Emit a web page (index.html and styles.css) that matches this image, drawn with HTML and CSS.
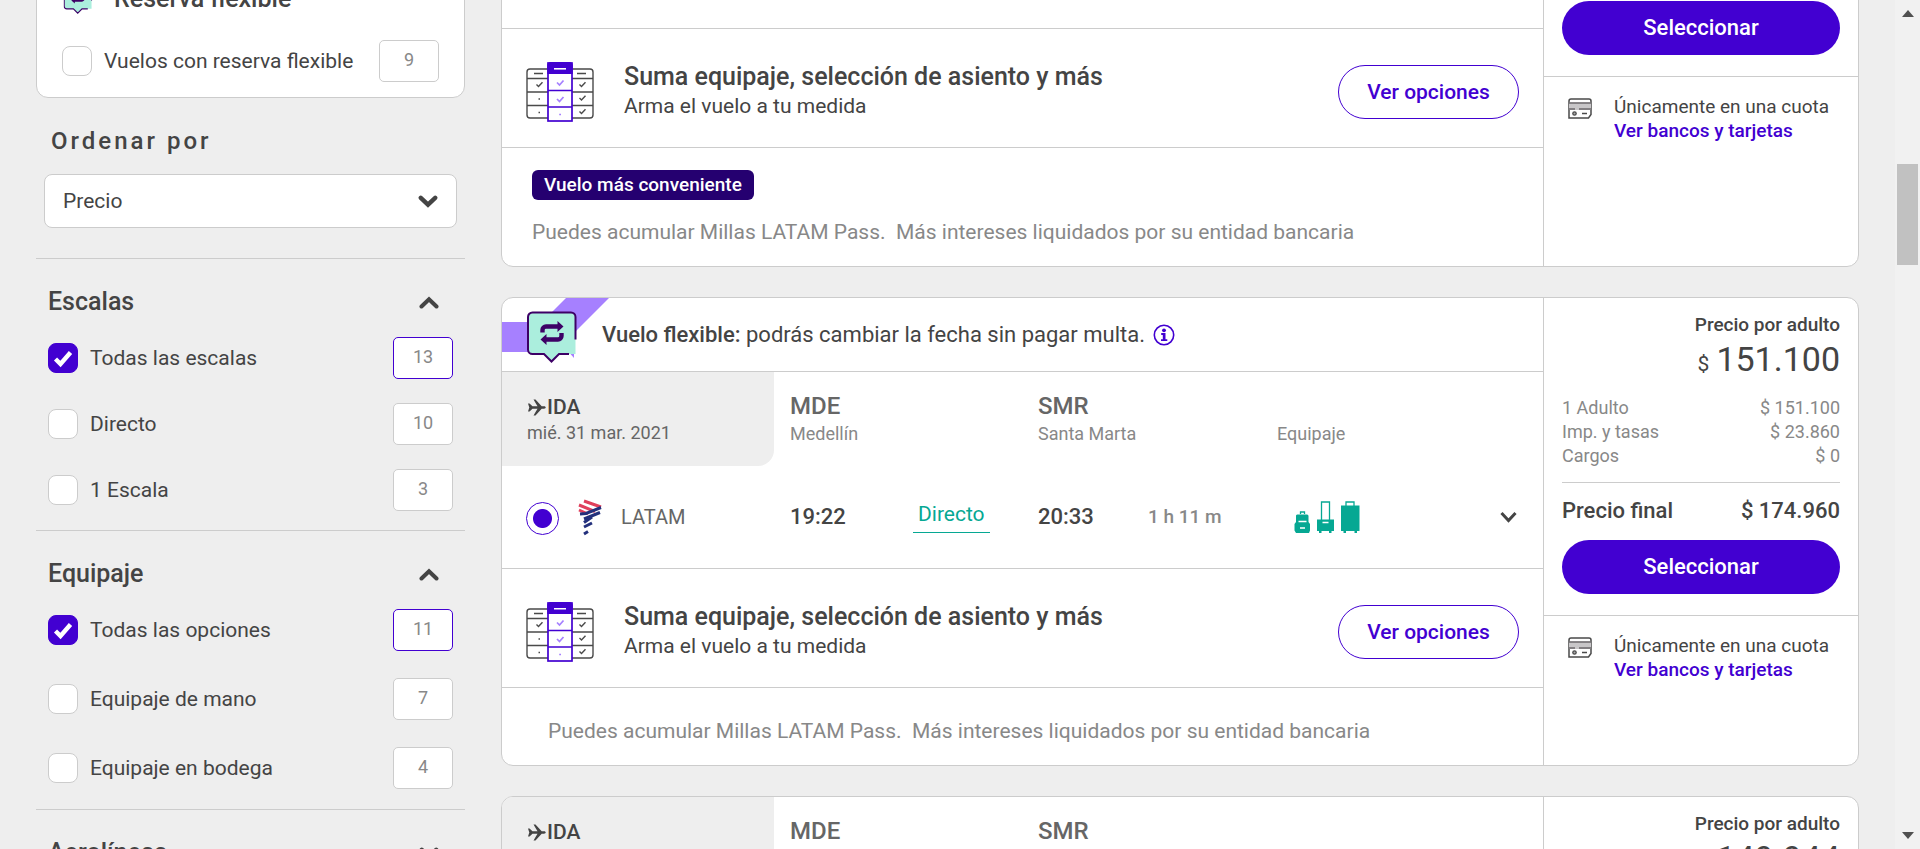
FILE: index.html
```html
<!DOCTYPE html>
<html lang="es">
<head>
<meta charset="utf-8">
<title>Vuelos Medellín - Santa Marta</title>
<link rel="stylesheet" href="styles.css">
</head>
<body>
<svg class="defs" aria-hidden="true">
  <symbol id="i-down" viewBox="0 0 20 13"><path d="M2.8 2.8 10 9.6l7.200-6.800" fill="none" stroke="currentColor" stroke-width="4.400" stroke-linecap="round"/></symbol>
  <symbol id="i-up" viewBox="0 0 20 13"><path d="M2.500 10.500 10 3.200l7.500 7.300" fill="none" stroke="currentColor" stroke-width="4" stroke-linecap="round"/></symbol>
  <symbol id="i-check" viewBox="0 0 30 30"><path d="m7.500 16 5 5L22.500 9.500" fill="none" stroke="#fff" stroke-width="4.400"/></symbol>
  <symbol id="i-flex" viewBox="0 0 50 52">
    <path d="M5 1.500h39a4.500 4.500 0 0 1 4.500 4.500v37H32l-7.500 8L17 43H5.500A4.500 4.500 0 0 1 1 38.500V6a4.500 4.500 0 0 1 4-4.500z" fill="#abeedd"/>
    <path d="M48.500 28.500V6A4.500 4.500 0 0 0 44 1.500H5.500A4.500 4.500 0 0 0 1 6v32.500A4.500 4.500 0 0 0 5.500 43H17l7.500 7.500L32 43h10" fill="none" stroke="#3d0066" stroke-width="2"/>
    <path d="M15.500 21.500v-2.500a3.500 3.500 0 0 1 3.500-3.500h13M34.500 22v3a3.500 3.500 0 0 1-3.500 3.500H18" fill="none" stroke="#3d0066" stroke-width="4.400"/>
    <path d="M30.500 10l6 5.500-6 5.500zM19.500 23l-6 5.500 6 5.500z" fill="#3d0066"/>
  </symbol>
  <symbol id="i-table" viewBox="0 0 68 60">
    <g fill="none" stroke="#4a4a4a" stroke-width="1.400">
      <rect x="1" y="7" width="66" height="49" rx="3" fill="#fff"/>
      <path d="M1 16.500h66M1 30h66M1 43.500h66M8 11.500h9M51 11.500h9"/>
      <path d="m10.500 22.500 2 2 4-4.200M53.500 22.500l2 2 4-4.200M53.500 36l2 2 4-4.200M53.500 49.500l2 2 4-4.200M12.500 37h1.500M12.500 50.500h1.500"/>
    </g>
    <rect x="22" y="1" width="24" height="58" fill="#fff" stroke="#4200d1" stroke-width="1.700"/>
    <path d="M21.200 12V3.500a3.500 3.500 0 0 1 3.500-3.500h18.600a3.500 3.500 0 0 1 3.500 3.500V12z" fill="#4200d1"/>
    <path d="M28 6.800h12" stroke="#fff" stroke-width="1.600"/>
    <path d="M22 28.500h24M22 45h24" stroke="#4200d1" stroke-width="1.700"/>
    <path d="m31 20.500 2.500 2.500 4-4.500M31 37l2.500 2.500 4-4.500M33.200 52.500h1.800" fill="none" stroke="#a680ff" stroke-width="1.700"/>
  </symbol>
  <symbol id="i-card" viewBox="0 0 24 21">
    <path d="M3 1h18a2 2 0 0 1 2 2v13.500L20.500 20H1V3a2 2 0 0 1 2-2z" fill="#fff" stroke="#4a4a4a" stroke-width="1.500"/>
    <path d="M1 4.500h22v7.500H1z" fill="#c8c6c8"/><path d="M1 5h22M1 11h6m4 0h12" stroke="#6b686b" stroke-width="1.700"/>
    <path d="M14 15.500h5" stroke="#4a4a4a" stroke-width="1.500"/><circle cx="6.500" cy="15.500" r="1.700" fill="#aaa" stroke="#4a4a4a" stroke-width="1.300"/>
  </symbol>
  <symbol id="i-plane" viewBox="0 0 19 17">
    <path d="M1 4.500h1.500l3 2.800h5L6.500.5h2l6.200 6.800h2.300c1.200 0 1.700.7 1.700 1.200s-.5 1.200-1.700 1.200h-2.300L8.500 16.500h-2l4-6.800h-5l-3 2.800H1L2.300 8.500z" fill="currentColor"/>
  </symbol>
</svg>

<div class="app">
  <aside class="sidebar">
    <section class="flex-card">
      <h2 class="flex-card-title"><svg class="flex-mini" viewBox="0 0 50 52"><use href="#i-flex"/></svg>Reserva flexible</h2>
      <label class="option">
        <span class="tick"><input type="checkbox"></span>
        <span class="option-name">Vuelos con reserva flexible</span>
        <span class="count">9</span>
      </label>
    </section>
    <section class="sort">
      <h2><label for="orden">Ordenar por</label></h2>
      <div class="select-box">
        <select id="orden"><option>Precio</option></select>
        <svg class="chevron"><use href="#i-down"/></svg>
      </div>
    </section>
    <section class="filter">
      <h2>Escalas <button class="toggle" aria-label="Contraer escalas"><svg class="chevron"><use href="#i-up"/></svg></button></h2>
      <label class="option"><span class="tick"><input type="checkbox" checked><svg><use href="#i-check"/></svg></span><span class="option-name">Todas las escalas</span><span class="count active">13</span></label>
      <label class="option"><span class="tick"><input type="checkbox"></span><span class="option-name">Directo</span><span class="count">10</span></label>
      <label class="option"><span class="tick"><input type="checkbox"></span><span class="option-name">1 Escala</span><span class="count">3</span></label>
    </section>
    <section class="filter roomy">
      <h2>Equipaje <button class="toggle" aria-label="Contraer equipaje"><svg class="chevron"><use href="#i-up"/></svg></button></h2>
      <label class="option"><span class="tick"><input type="checkbox" checked><svg><use href="#i-check"/></svg></span><span class="option-name">Todas las opciones</span><span class="count active">11</span></label>
      <label class="option"><span class="tick"><input type="checkbox"></span><span class="option-name">Equipaje de mano</span><span class="count">7</span></label>
      <label class="option"><span class="tick"><input type="checkbox"></span><span class="option-name">Equipaje en bodega</span><span class="count">4</span></label>
    </section>
    <section class="filter">
      <h2>Aerolíneas <button class="toggle" aria-label="Expandir aerolíneas"><svg class="chevron"><use href="#i-down"/></svg></button></h2>
    </section>
  </aside>

  <main class="results">
    <article class="card card-first">
      <div class="trip">
        <div class="trip-end"></div>
        <div class="upsell">
          <svg class="table-icon"><use href="#i-table"/></svg>
          <div><h3>Suma equipaje, selección de asiento y más</h3><p>Arma el vuelo a tu medida</p></div>
          <button class="btn-outline">Ver opciones</button>
        </div>
        <div class="notes">
          <span class="badge">Vuelo más conveniente</span>
          <p>Puedes acumular Millas LATAM Pass.&nbsp; Más intereses liquidados por su entidad bancaria</p>
        </div>
      </div>
      <div class="fare">
        <div class="fare-top"><button class="btn">Seleccionar</button></div>
        <div class="payment"><svg class="card-icon"><use href="#i-card"/></svg><p>Únicamente en una cuota<br><a href="#">Ver bancos y tarjetas</a></p></div>
      </div>
    </article>

    <article class="card">
      <div class="trip">
        <div class="flexible">
          <svg class="ribbon" viewBox="0 0 110 73">
            <path d="M0 24h50v30H0zM64 0h43L72 35V60L40 24z" fill="#a680ff"/>
            <use href="#i-flex" x="25" y="13" width="50" height="52"/>
          </svg>
          <p><strong>Vuelo flexible:</strong> podrás cambiar la fecha sin pagar multa.</p>
          <button class="info" aria-label="Más información"><svg viewBox="0 0 22 22"><circle cx="11" cy="11" r="9.700" fill="none" stroke="currentColor" stroke-width="1.600"/><circle cx="11" cy="6.300" r="1.900" fill="currentColor"/><path d="M8.200 9h4.300v6.200h1.800v1.900H8v-1.900h1.800v-4.300H8.200z" fill="currentColor"/></svg></button>
        </div>
        <div class="leg-head">
          <div class="leg-date"><h3><svg class="plane"><use href="#i-plane"/></svg>IDA</h3><p>mié. 31 mar. 2021</p></div>
          <div class="city"><h4>MDE</h4><p>Medellín</p></div>
          <div class="city"><h4>SMR</h4><p>Santa Marta</p></div>
          <div class="city bag-label"><p>Equipaje</p></div>
        </div>
        <div class="leg">
          <label class="airline">
            <input type="radio" name="ida" checked>
            <svg class="latam" viewBox="0 0 24 37" fill="none" stroke-width="3"><path d="M6 2 23 8M1 6l16 6.500M1 11l9 4" stroke="#e0405c"/><path d="M23 8.500 8 14.500 2 15M22 13.500 6 20M14 18l-8 5.500M14 24l-8 4M10 32.500 6 35" stroke="#23307c"/></svg>
            <span>LATAM</span>
          </label>
          <b class="time">19:22</b>
          <a class="stops" href="#">Directo</a>
          <b class="time">20:33</b>
          <span class="duration">1 h 11 m</span>
          <div class="bags">
            <svg class="bags-icon" viewBox="0 0 66 32" role="img" aria-label="Equipaje incluido">
              <g fill="#06a893"><path d="M4 13.500h9a1.500 1.500 0 0 1 1.500 1.500v6l1.500 2v6.500L15 32H2l-1.500-2.500V23L2 21v-6a1.500 1.500 0 0 1 2-1.500z"/><path d="M23 18.500h17v11.500H23zM47 4.500h18.500V30H47zM25 29h2.500v3H25zM35 29h2.500v3H35zM49.500 29H52v3h-2.500zM60.500 29H63v3h-2.500z"/></g>
              <path d="M6.500 13v-2h4v2M27.500 19V1h8v18M52 5V1h8v4" fill="none" stroke="#06a893" stroke-width="1.300"/>
              <path d="M4.500 20.500h8M6 27h5M28.500 21.500h6" stroke="#fff" stroke-width="1.400"/>
            </svg>
            <button class="toggle" aria-label="Ver detalle"><svg class="chevron-small" viewBox="0 0 17 12"><path d="m1.500 2 7 7.500 7-7.500" fill="none" stroke="currentColor" stroke-width="3"/></svg></button>
          </div>
        </div>
        <div class="upsell">
          <svg class="table-icon"><use href="#i-table"/></svg>
          <div><h3>Suma equipaje, selección de asiento y más</h3><p>Arma el vuelo a tu medida</p></div>
          <button class="btn-outline">Ver opciones</button>
        </div>
        <div class="notes notes-single">
          <p>Puedes acumular Millas LATAM Pass.&nbsp; Más intereses liquidados por su entidad bancaria</p>
        </div>
      </div>
      <div class="fare">
        <div class="fare-top">
          <h4>Precio por adulto</h4>
          <p class="price"><span>$</span>151.100</p>
          <dl class="detail">
            <div><dt>1 Adulto</dt><dd>$ 151.100</dd></div>
            <div><dt>Imp. y tasas</dt><dd>$ 23.860</dd></div>
            <div><dt>Cargos</dt><dd>$ 0</dd></div>
          </dl>
          <p class="total"><span>Precio final</span><span>$ 174.960</span></p>
          <button class="btn">Seleccionar</button>
        </div>
        <div class="payment"><svg class="card-icon"><use href="#i-card"/></svg><p>Únicamente en una cuota<br><a href="#">Ver bancos y tarjetas</a></p></div>
      </div>
    </article>

    <article class="card">
      <div class="trip">
        <div class="leg-head">
          <div class="leg-date"><h3><svg class="plane"><use href="#i-plane"/></svg>IDA</h3><p>mié. 31 mar. 2021</p></div>
          <div class="city"><h4>MDE</h4><p>Medellín</p></div>
          <div class="city"><h4>SMR</h4><p>Santa Marta</p></div>
          <div class="city bag-label"><p>Equipaje</p></div>
        </div>
      </div>
      <div class="fare">
        <div class="fare-top">
          <h4>Precio por adulto</h4>
          <p class="price"><span>$</span>149.944</p>
        </div>
      </div>
    </article>
  </main>

  <div class="scrollbar" aria-hidden="true">
    <svg viewBox="0 0 12 7"><path d="M0 7 6 0l6 7z" fill="#505050"/></svg>
    <div class="track"><div class="thumb"></div></div>
    <svg viewBox="0 0 12 7"><path d="M0 0h12L6 7z" fill="#505050"/></svg>
  </div>
</div>
</body>
</html>
```
FILE: styles.css
```css
:root {
  --purple: #4200d1;
  --line: #ccc;
  --ink: #444;
  --mid: #666;
  --soft: #888;
  --text: 21px;
  --small: 18px;
  --title: 25px;
}
* { box-sizing: border-box; margin: 0; }
body {
  height: 100vh;
  overflow: hidden;
  background: #eee;
  color: var(--ink);
  font-family: Roboto, "Liberation Sans", sans-serif;
  font-size: var(--text);
  line-height: 24px;
}
button, select, input { font: inherit; color: inherit; }
button { border: 0; background: none; padding: 0; cursor: pointer; }
h2, h3, h4, strong, b { font-weight: 500; }
svg { display: block; flex: none; }
.defs { position: absolute; width: 0; height: 0; }

.app { display: flex; height: 100vh; padding-left: 36px; overflow: hidden; }

/* Filters */
.sidebar { flex: 0 0 429px; }
.flex-card {
  margin-top: -48px;
  padding: 31px 25px 15px;
  background: #fff;
  border: 1px solid var(--line);
  border-radius: 12px;
}
.flex-card-title { display: flex; align-items: center; gap: 20px; margin-bottom: 26px; font-size: var(--title); }
.flex-mini { width: 32px; height: 30px; }
.sort { padding: 31px 8px 30px; border-bottom: 1px solid var(--line); }
.sort h2 { padding-left: 7px; margin-bottom: 21px; font-size: 24px; letter-spacing: 3px; }
.select-box { display: grid; align-items: center; }
.select-box > * { grid-area: 1 / 1; }
.select-box select {
  height: 54px;
  padding: 0 18px;
  appearance: none;
  background: #fff;
  border: 1px solid var(--line);
  border-radius: 8px;
}
.select-box .chevron { justify-self: end; margin-right: 19px; pointer-events: none; }
.chevron { width: 20px; height: 13px; }
.filter { padding: 31px 12px 19px; border-bottom: 1px solid var(--line); }
.filter h2 { display: flex; justify-content: space-between; align-items: center; margin-bottom: 23px; padding-right: 14px; font-size: var(--title); }
.option { display: flex; align-items: center; }
.option + .option { margin-top: 24px; }
.roomy .option + .option { margin-top: 27px; }
.roomy { padding-bottom: 20px; }
.tick { display: grid; flex: none; margin-right: 12px; }
.tick > * { grid-area: 1 / 1; width: 30px; height: 30px; }
.tick svg { pointer-events: none; }
.tick input { margin: 0; appearance: none; background: #fff; border: 1px solid var(--line); border-radius: 8px; }
.tick input:checked { background: var(--purple); border-color: var(--purple); }
.option-name { flex: 1; white-space: nowrap; }
.count {
  width: 60px;
  height: 42px;
  background: #fff;
  border: 1px solid var(--line);
  border-radius: 5px;
  color: var(--soft);
  font-size: var(--small);
  line-height: 38px;
  text-align: center;
}
.count.active { border-color: var(--purple); }

/* Results */
.results { flex: 1; margin: 0 36px; }
.card {
  display: grid;
  grid-template-columns: 1fr 315px;
  margin-bottom: 30px;
  background: #fff;
  border: 1px solid var(--line);
  border-radius: 12px;
  overflow: hidden;
}
.card-first { margin-top: -12px; }
.fare { border-left: 1px solid var(--line); }
.trip-end { height: 39px; }
.upsell { display: flex; align-items: center; height: 119px; padding: 0 24px; border-top: 1px solid var(--line); }
.upsell > div { flex: 1; }
.upsell h3 { margin: 5px 0 3px; font-size: var(--title); line-height: 28px; }
.table-icon { width: 68px; height: 60px; margin: 8px 30px 0 0; }
.btn-outline { width: 181px; height: 54px; margin-top: 8px; border: 1px solid var(--purple); border-radius: 27px; color: var(--purple); font-weight: 500; }
.notes { padding: 22px 30px; border-top: 1px solid var(--line); color: var(--soft); }
.badge { display: inline-block; padding: 3px 12px; margin-bottom: 20px; background: #250070; border-radius: 6px; color: #fff; font-weight: 500; font-size: 19px; }
.notes-single { padding: 31px 46px 22px; }

.fare-top { padding: 15px 18px 21px; }
.btn { width: 100%; height: 54px; border-radius: 27px; background: var(--purple); color: #fff; font-weight: 500; font-size: 22px; }
.card-first .fare-top { padding-top: 12px; }
.payment { display: flex; gap: 22px; padding: 18px 24px; border-top: 1px solid var(--line); font-size: 19px; }
.payment a { color: var(--purple); font-weight: 500; text-decoration: none; }
.card-icon { width: 24px; height: 21px; margin-top: 3px; }
.fare h4 { font-size: 19px; text-align: right; }
.price { font-size: 34px; line-height: 44px; text-align: right; }
.price span { margin-right: 7px; font-size: var(--text); }
.detail { margin: 10px 0 16px; padding-bottom: 14px; border-bottom: 1px solid var(--line); color: var(--soft); font-size: var(--small); }
.detail div, .total { display: flex; justify-content: space-between; }
.detail dd { margin: 0; }
.total { margin-bottom: 17px; font-weight: 500; font-size: 22px; }

.flexible { display: flex; align-items: center; height: 73px; font-size: 22px; }
.ribbon { width: 110px; height: 73px; margin-right: -10px; }
.info { margin-left: 8px; color: var(--purple); }
.info svg { width: 22px; height: 22px; }
.leg-head, .leg { display: grid; grid-template-columns: 288fr 123fr 125fr 110fr 129fr 266fr; }
.flexible + .leg-head { border-top: 1px solid var(--line); }
.leg-date { height: 94px; margin-right: 16px; padding: 23px 25px; background: #eee; border-bottom-right-radius: 16px; color: var(--mid); font-size: var(--small); }
.leg-date h3 { display: flex; align-items: center; gap: 1px; color: var(--ink); font-size: var(--text); }
.leg-date p { line-height: 28px; }
.plane { width: 19px; height: 17px; }
.city { grid-column: span 2; padding-top: 22px; color: var(--soft); font-size: var(--small); }
.city h4 { color: var(--mid); font-size: 24px; }
.city p { line-height: 32px; }
.city.bag-label { grid-column: span 1; padding-top: 46px; }
.leg { align-items: center; height: 102px; }
.airline { display: flex; align-items: center; padding-left: 24px; color: var(--mid); font-size: 20px; }
.airline input { flex: none; width: 33px; height: 33px; margin: 3px 19px 0 0; appearance: none; border: 1px solid var(--purple); border-radius: 50%; background: radial-gradient(circle, var(--purple) 9px, #fff 10px); }
.latam { width: 24px; height: 37px; margin-right: 19px; }
.time { font-size: 22px; }
.stops { justify-self: start; padding: 0 5px 6px; border-bottom: 1px solid #06a893; color: #06a893; text-decoration: none; }
.duration { color: var(--soft); font-weight: 500; font-size: 19px; }
.bags { display: flex; justify-content: space-between; align-items: center; padding: 0 26px 0 17px; }
.bags-icon { width: 66px; height: 32px; }
.chevron-small { width: 17px; height: 12px; }

/* Window scrollbar */
.scrollbar { display: flex; flex: 0 0 25px; flex-direction: column; align-items: center; padding: 10px 0; background: #f1f1f1; }
.scrollbar svg { width: 12px; height: 7px; }
.track { flex: 1; width: 21px; padding-top: 147px; }
.thumb { height: 101px; background: #c1c1c1; }
```
